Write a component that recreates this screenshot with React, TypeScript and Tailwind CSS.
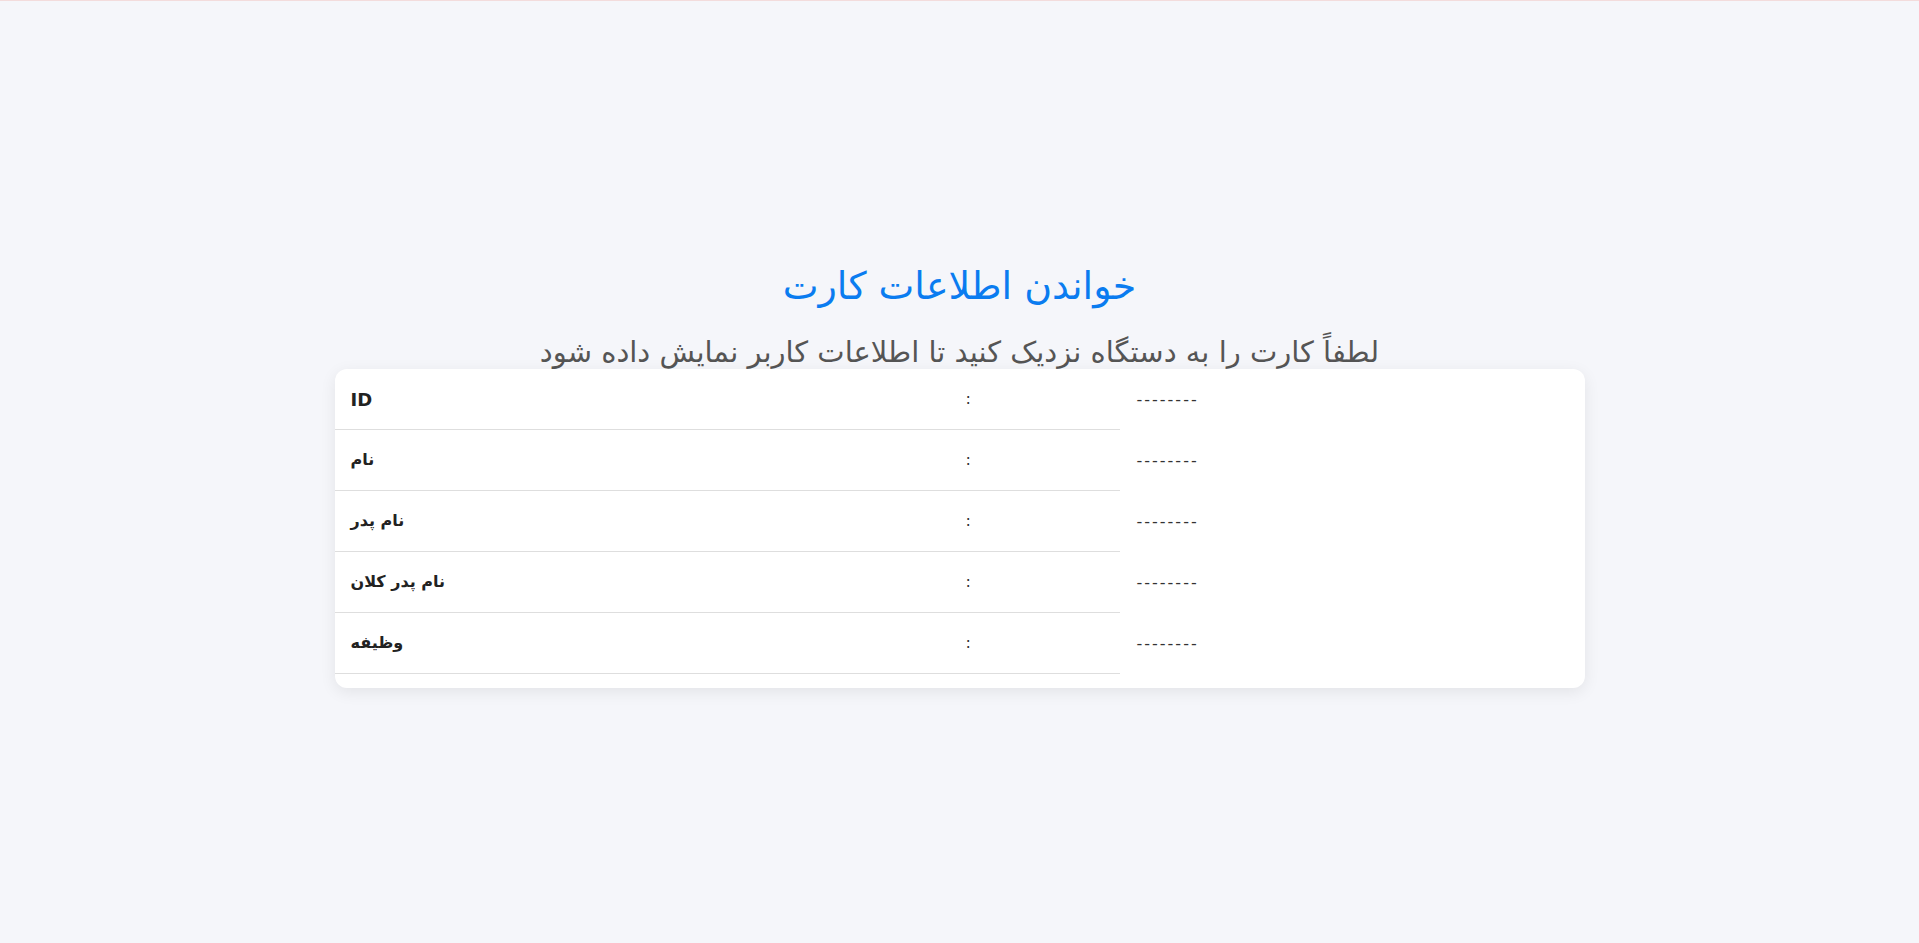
import React from "react";

const rows = [
  { label: "ID" },
  { label: "نام" },
  { label: "نام پدر" },
  { label: "نام پدر کلان" },
  { label: "وظیفه" },
];

export default function App() {
  return (
    <div
      className="min-h-screen bg-[#f5f6fa] border-t border-[#f3dcdc] flex flex-col items-center pt-[265px]"
      style={{ fontFamily: '"DejaVu Sans", "Noto Sans", sans-serif' }}
    >
      <h1 dir="rtl" className="text-[38px] leading-[40px] text-[#0a7cf0] font-normal">
        خواندن اطلاعات کارت
      </h1>
      <p dir="rtl" className="mt-[30px] text-[29px] leading-[32px] text-[#555555]">
        لطفاً کارت را به دستگاه نزدیک کنید تا اطلاعات کاربر نمایش داده شود
      </p>
      <div className="relative mt-px w-[1250px] bg-white rounded-xl shadow-[0_4px_16px_rgba(0,0,0,0.08)] pb-[14px]">
        {rows.map((r) => (
          <div key={r.label} className="flex h-[61px]">
            <div className="w-[785px] flex border-b border-[#dedede]">
              <div className="w-[615px] pl-4 flex items-center text-[16px] font-bold text-[#222222]">
                <span dir="rtl" className={r.label === "ID" ? "text-[18px]" : ""}>{r.label}</span>
              </div>
              <div className="flex-1 pl-4 flex items-center text-[16px] text-[#333333]">:</div>
            </div>
            <div className="flex-1 pl-[17px] flex items-center text-[16px] tracking-[2px] text-[#333333]">--------</div>
          </div>
        ))}
      </div>
    </div>
  );
}
